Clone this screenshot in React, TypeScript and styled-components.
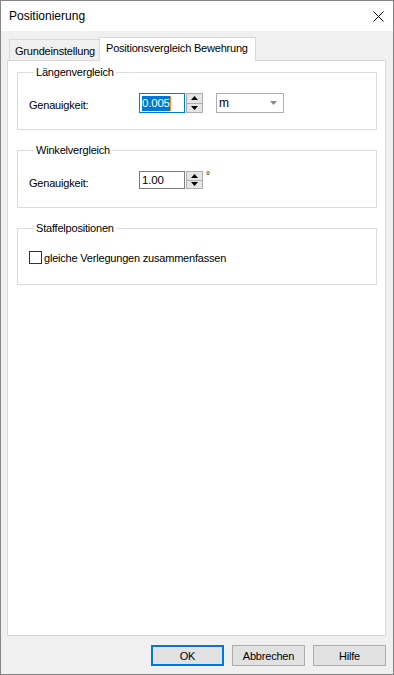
import styled, { createGlobalStyle } from "styled-components";

const GlobalStyle = createGlobalStyle`
  html, body {
    margin: 0;
    padding: 0;
    background: #ffffff;
  }
  body {
    font-family: "Liberation Sans", Arial, sans-serif;
    font-size: 11px;
    color: #000;
  }
`;

const Window = styled.div`
  box-sizing: border-box;
  width: 394px;
  height: 675px;
  border: 1px solid #858585;
  display: flex;
  flex-flow: column;
  background: #f0f0f0;
`;

const TitleBar = styled.div`
  height: 30px;
  background: #ffffff;
  display: flex;
  align-items: center;
  justify-content: space-between;
  padding: 0 9px 0 8px;
  font-size: 12px;
`;

const Body = styled.div`
  flex: 1;
  display: flex;
  flex-flow: column;
  padding: 6px 7px 8px 6px;
  min-height: 0;
  letter-spacing: -0.2px;
`;

const TabStrip = styled.div`
  height: 23px;
  display: flex;
  align-items: flex-end;
  padding-left: 2px;
`;

const Tab = styled.div<{ $active?: boolean }>`
  box-sizing: border-box;
  position: relative;
  z-index: ${(p) => (p.$active ? 1 : 0)};
  height: ${(p) => (p.$active ? "24px" : "21px")};
  width: ${(p) => (p.$active ? "157px" : "91px")};
  margin-left: ${(p) => (p.$active ? "-1px" : "0")};
  margin-bottom: ${(p) => (p.$active ? "-1px" : "0")};
  padding: ${(p) => (p.$active ? "4px 0 0 6px" : "5px 0 0 5px")};
  border: 1px solid #d9d9d9;
  border-bottom: none;
  background: ${(p) => (p.$active ? "#ffffff" : "#f0f0f0")};
  white-space: nowrap;
`;

const TabPanel = styled.div`
  flex: 1;
  background: #ffffff;
  border: 1px solid #d9d9d9;
  padding: 5px 8px 0 9px;
  display: flex;
  flex-flow: column;
  gap: 14px;
`;

const GroupBox = styled.fieldset<{ $padBottom: number }>`
  margin: 0;
  min-width: 0;
  border: 1px solid #dcdcdc;
  padding: 14px 8px ${(p) => p.$padBottom}px 11px;
`;

const Legend = styled.legend`
  margin-left: 5px;
  padding: 0 2px;
  line-height: 13px;
`;

const FieldRow = styled.div<{ $height: number }>`
  height: ${(p) => p.$height}px;
  display: flex;
  align-items: flex-start;
`;

const FieldLabel = styled.span`
  width: 110px;
  padding-top: 6px;
`;

const NumberBox = styled.div<{ $focused?: boolean; $height: number }>`
  box-sizing: border-box;
  width: 46px;
  height: ${(p) => p.$height}px;
  border: 1px solid ${(p) => (p.$focused ? "#0078d7" : "#7a7a7a")};
  background: #fff;
  display: flex;
  align-items: center;
  padding-left: 2px;
  font-size: 11.5px;
`;

const Selected = styled.span`
  background: #0078d7;
  color: #fff;
  line-height: 15px;
  border-right: 1px solid #f28a1a;
`;

const Spinner = styled.div<{ $height: number }>`
  box-sizing: border-box;
  width: 17px;
  height: ${(p) => p.$height}px;
  display: flex;
  flex-flow: column;
  margin-left: 1px;
  border: 1px solid #adadad;
  background: #e5e5e5;
`;

const SpinButton = styled.div<{ $top?: boolean }>`
  flex: 1;
  display: flex;
  align-items: center;
  justify-content: center;
  border-bottom: ${(p) => (p.$top ? "1px solid #adadad" : "none")};
`;

const Unit = styled.span`
  margin-left: 3px;
  font-size: 10px;
  line-height: 10px;
`;

const Dropdown = styled.div`
  box-sizing: border-box;
  width: 68px;
  height: 20px;
  margin-left: 13px;
  border: 1px solid #adadad;
  background: #fff;
  display: flex;
  align-items: center;
  justify-content: space-between;
  padding: 0 6px 0 2px;
  font-size: 12px;
`;

const CheckRow = styled.label`
  height: 16px;
  display: flex;
  align-items: center;
  gap: 2px;
`;

const CheckBox = styled.span`
  box-sizing: border-box;
  width: 13px;
  height: 13px;
  border: 1px solid #333333;
  background: #fff;
`;

const CheckText = styled.span`
  padding-top: 1px;
`;

const Footer = styled.div`
  display: flex;
  justify-content: flex-end;
  gap: 8px;
  padding-top: 9px;
`;

const Button = styled.button<{ $default?: boolean }>`
  box-sizing: border-box;
  width: 73px;
  height: 21px;
  margin: 0;
  padding: 0;
  font-family: inherit;
  font-size: 11px;
  letter-spacing: -0.2px;
  color: #000;
  background: #e1e1e1;
  border: ${(p) => (p.$default ? "2px solid #0078d7" : "1px solid #adadad")};
`;

const Arrow = ({ up, color = "#000" }: { up?: boolean; color?: string }) => (
  <svg width="7" height="4" viewBox="0 0 7 4">
    <path d={up ? "M0 4 L3.5 0 L7 4 Z" : "M0 0 L7 0 L3.5 4 Z"} fill={color} />
  </svg>
);

const CloseIcon = () => (
  <svg width="11" height="11" viewBox="0 0 11 11">
    <path d="M0.5 0.5 L10.5 10.5 M10.5 0.5 L0.5 10.5" stroke="#000" strokeWidth="1" />
  </svg>
);

const Spin = ({ height }: { height: number }) => (
  <Spinner $height={height}>
    <SpinButton $top>
      <Arrow up />
    </SpinButton>
    <SpinButton>
      <Arrow />
    </SpinButton>
  </Spinner>
);

export default function App() {
  return (
    <>
      <GlobalStyle />
      <Window>
        <TitleBar>
          <span>Positionierung</span>
          <CloseIcon />
        </TitleBar>
        <Body>
          <TabStrip>
            <Tab>Grundeinstellung</Tab>
            <Tab $active>Positionsvergleich Bewehrung</Tab>
          </TabStrip>
          <TabPanel>
            <GroupBox $padBottom={16}>
              <Legend>Längenvergleich</Legend>
              <FieldRow $height={20}>
                <FieldLabel>Genauigkeit:</FieldLabel>
                <NumberBox $focused $height={20}>
                  <Selected>0.005</Selected>
                </NumberBox>
                <Spin height={20} />
                <Dropdown>
                  <span>m</span>
                  <Arrow color="#8a8a8a" />
                </Dropdown>
              </FieldRow>
            </GroupBox>

            <GroupBox $padBottom={18}>
              <Legend>Winkelvergleich</Legend>
              <FieldRow $height={18}>
                <FieldLabel>Genauigkeit:</FieldLabel>
                <NumberBox $height={18}>1.00</NumberBox>
                <Spin height={18} />
                <Unit>°</Unit>
              </FieldRow>
            </GroupBox>

            <GroupBox $padBottom={19}>
              <Legend>Staffelpositionen</Legend>
              <CheckRow>
                <CheckBox />
                <CheckText>gleiche Verlegungen zusammenfassen</CheckText>
              </CheckRow>
            </GroupBox>
          </TabPanel>
          <Footer>
            <Button $default>OK</Button>
            <Button>Abbrechen</Button>
            <Button>Hilfe</Button>
          </Footer>
        </Body>
      </Window>
    </>
  );
}
